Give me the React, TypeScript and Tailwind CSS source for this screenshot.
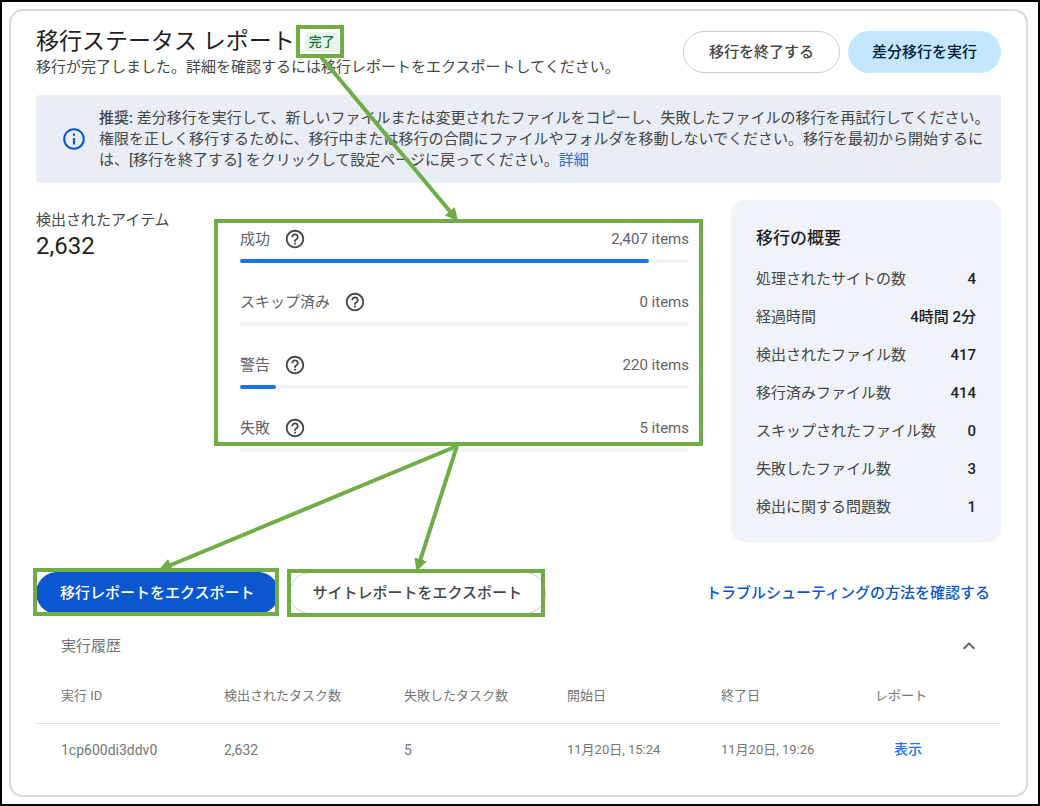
import { useState } from "react";

const results = [
  { label: "成功", value: "2,407 items", percent: 91 },
  { label: "スキップ済み", value: "0 items", percent: 0 },
  { label: "警告", value: "220 items", percent: 8 },
  { label: "失敗", value: "5 items", percent: 0 },
];

const summary = [
  ["処理されたサイトの数", "4"],
  ["経過時間", "4時間 2分"],
  ["検出されたファイル数", "417"],
  ["移行済みファイル数", "414"],
  ["スキップされたファイル数", "0"],
  ["失敗したファイル数", "3"],
  ["検出に関する問題数", "1"],
];

function InfoIcon() {
  return (
    <svg className="size-[26px] shrink-0 fill-[#0b57d0]" viewBox="0 0 24 24" aria-hidden="true">
      <path d="M11 7h2v2h-2zm0 4h2v6h-2zm1-9C6.48 2 2 6.48 2 12s4.48 10 10 10 10-4.48 10-10S17.52 2 12 2zm0 18c-4.41 0-8-3.59-8-8s3.59-8 8-8 8 3.59 8 8-3.59 8-8 8z" />
    </svg>
  );
}

function HelpIcon() {
  return (
    <svg className="size-[22px] fill-[#444746]" viewBox="0 0 24 24" aria-hidden="true">
      <path d="M11 18h2v-2h-2v2zm1-16C6.48 2 2 6.48 2 12s4.48 10 10 10 10-4.48 10-10S17.52 2 12 2zm0 18c-4.41 0-8-3.59-8-8s3.59-8 8-8 8 3.59 8 8-3.59 8-8 8zm0-14c-2.21 0-4 1.79-4 4h2c0-1.1.9-2 2-2s2 .9 2 2c0 2-3 1.75-3 5h2c0-2.25 3-2.5 3-5 0-2.21-1.79-4-4-4z" />
    </svg>
  );
}

function Callouts() {
  return (
    <svg
      className="pointer-events-none absolute -top-[2px] -left-[2px] h-[806px] w-[1040px]"
      viewBox="0 0 1040 806"
      fill="none"
      stroke="#70ad47"
      strokeWidth="4"
      aria-hidden="true"
    >
      <defs>
        <marker id="head" markerUnits="userSpaceOnUse" markerWidth="13" markerHeight="13" refX="5" refY="6.5" orient="auto">
          <path d="M0 0L13 6.5L0 13Z" fill="#70ad47" stroke="none" />
        </marker>
      </defs>
      <rect x="298" y="27" width="44" height="29" />
      <rect x="216" y="221" width="485" height="223" />
      <rect x="35" y="570" width="242" height="44" />
      <rect x="289" y="571" width="254" height="44" />
      <path d="M321 57L453 215" markerEnd="url(#head)" />
      <path d="M457 446L166 567" markerEnd="url(#head)" />
      <path d="M457 446L419 564" markerEnd="url(#head)" />
    </svg>
  );
}

export default function App() {
  const [open, setOpen] = useState(true);

  return (
    <div className="relative flex min-h-screen flex-col border-2 border-black bg-white py-[7px] pr-[10px] pl-[7px] font-['Roboto','Noto_Sans_CJK_JP',sans-serif] text-[15px] leading-5 text-[#444746]">
      <main className="flex-1 rounded-[14px] border-2 border-[#dadada] px-[25px] pt-4 pb-[19px]">
        <header className="flex items-center justify-between">
          <div>
            <div className="flex items-center gap-[10px]">
              <h1 className="text-[23px] leading-[30px] text-[#1f1f1f]">移行ステータス レポート</h1>
              <span className="rounded-[4px] bg-[#e6f4ea] px-1 text-[13px] font-medium text-[#137333]">完了</span>
            </div>
            <p>移行が完了しました。詳細を確認するには移行レポートをエクスポートしてください。</p>
          </div>
          <div className="flex gap-2">
            <button type="button" className="h-[42px] rounded-full border border-[#c9cbcd] px-[25px] font-medium">
              移行を終了する
            </button>
            <button type="button" className="h-[42px] rounded-full bg-[#c2e7ff] px-6 font-medium text-[#001d35]">
              差分移行を実行
            </button>
          </div>
        </header>

        <section className="mt-[18px] flex min-h-[88px] items-center gap-3 rounded-[4px] bg-[#e8edf6] pr-1 pl-[25px]">
          <InfoIcon />
          <p className="leading-[21px]">
            <span className="font-medium">推奨:</span>{" "}
            差分移行を実行して、新しいファイルまたは変更されたファイルをコピーし、失敗したファイルの移行を再試行してください。
            <br />
            権限を正しく移行するために、移行中または移行の合間にファイルやフォルダを移動しないでください。移行を最初から開始するに
            <br />
            は、[移行を終了する] をクリックして設定ページに戻ってください。
            <a href="#details" className="text-[#3367d6]">詳細</a>
          </p>
        </section>

        <section className="mt-[17px] flex">
          <div className="w-[204px] shrink-0 pt-[10px]">
            <h2>検出されたアイテム</h2>
            <p className="text-2xl text-[#1f1f1f]">2,632</p>
          </div>
          <ul className="mr-[42px] flex flex-1 flex-col gap-[27px] pt-[27px]">
            {results.map((r) => (
              <li key={r.label} className="text-[#5f6368]">
                <div className="flex h-6 items-center">
                  <span>{r.label}</span>
                  <button type="button" aria-label={r.label + "のヘルプ"} className="ml-[14px]">
                    <HelpIcon />
                  </button>
                  <span className="ml-auto">{r.value}</span>
                </div>
                <div className="mt-2 h-1 rounded-full bg-[#f1f3f4]">
                  <div className="h-1 rounded-full bg-[#1a73e8]" style={{ width: `${r.percent}%` }} />
                </div>
              </li>
            ))}
          </ul>
          <aside className="w-[270px] shrink-0 rounded-[14px] bg-[#f0f3f9] px-[25px] pt-[26px] pb-[25px]">
            <h2 className="text-[17px] leading-6 font-medium text-[#1f1f1f]">移行の概要</h2>
            <dl className="mt-[19px] flex flex-col gap-[18px]">
              {summary.map(([label, value]) => (
                <div key={label} className="flex justify-between">
                  <dt>{label}</dt>
                  <dd className="font-medium text-[#1f1f1f]">{value}</dd>
                </div>
              ))}
            </dl>
          </aside>
        </section>

        <div className="mt-[30px] flex items-center gap-[10px] font-medium">
          <button type="button" className="h-[42px] rounded-full border border-[#0b57d0] bg-[#0b57d0] px-[23px] text-white">
            移行レポートをエクスポート
          </button>
          <button type="button" className="h-[42px] rounded-full border border-[#c9cbcd] px-[23px]">
            サイトレポートをエクスポート
          </button>
          <a href="#troubleshooting" className="mr-[11px] ml-auto text-[#0b57d0]">
            トラブルシューティングの方法を確認する
          </a>
        </div>

        <section className="text-[#747775]">
          <h2 className="mt-5">
            <button
              type="button"
              aria-expanded={open}
              onClick={() => setOpen(!open)}
              className="flex w-full items-center justify-between pr-5 pl-[25px]"
            >
              実行履歴
              <svg className="size-6 fill-[#5f6368]" viewBox="0 0 24 24" aria-hidden="true">
                <path d="M12 8l-6 6 1.41 1.41L12 10.83l4.59 4.58L18 14z" />
              </svg>
            </button>
          </h2>
          {open && (
            <table className="mt-3 w-full table-fixed text-left text-[13px]">
              <thead>
                <tr className="h-[53px] border-b border-[#e0e0e0]">
                  <th className="w-[188px] pl-[25px] font-normal">実行 ID</th>
                  <th className="w-[180px] font-normal">検出されたタスク数</th>
                  <th className="w-[163px] font-normal">失敗したタスク数</th>
                  <th className="w-[154px] font-normal">開始日</th>
                  <th className="w-[154px] font-normal">終了日</th>
                  <th className="font-normal">レポート</th>
                </tr>
              </thead>
              <tbody>
                <tr className="h-[53px]">
                  <td className="pl-[25px] text-sm">1cp600di3ddv0</td>
                  <td className="text-sm">2,632</td>
                  <td className="text-sm">5</td>
                  <td>11月20日, 15:24</td>
                  <td>11月20日, 19:26</td>
                  <td className="pl-[19px]">
                    <a href="#report" className="text-sm font-medium text-[#1a73e8]">表示</a>
                  </td>
                </tr>
              </tbody>
            </table>
          )}
        </section>
      </main>
      <Callouts />
    </div>
  );
}
